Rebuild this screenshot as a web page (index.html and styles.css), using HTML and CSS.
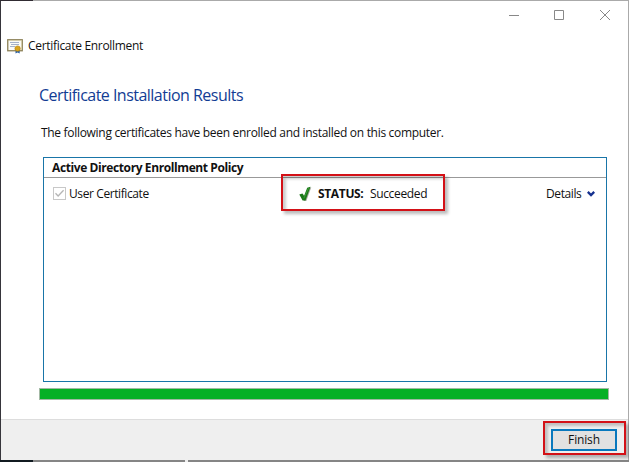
FILE: index.html
```html
<!DOCTYPE html>
<html lang="en">
<head>
<meta charset="utf-8">
<title>Certificate Enrollment</title>
<link rel="stylesheet" href="styles.css">
</head>
<body>
<div class="window">
  <div class="controls">
    <svg width="12" height="12" viewBox="0 0 12 12"><path d="M2 6.5H12"/></svg>
    <svg width="12" height="12" viewBox="0 0 12 12"><path d="M1.5 1.5H10.5V10.5H1.5Z"/></svg>
    <svg width="12" height="12" viewBox="0 0 12 12"><path d="M1 1L11 11M11 1L1 11"/></svg>
  </div>
  <header class="caption">
    <svg class="cert" width="17" height="15" viewBox="0 0 17 15">
      <rect x=".75" y=".75" width="14.5" height="11" fill="#fbfbf6" stroke="#8c8157" stroke-width="1.3"/>
      <path d="M1.5 1.5H14.5V10.5" fill="none" stroke="#d8cfa5" stroke-width=".6"/>
      <path d="M3 3.5H12M4 5.5H12M3 7.5H8" stroke="#9ba9c4" stroke-width=".9"/>
      <path d="M8.5 10V14.6L10.5 13.4L12.7 14.6V10Z" fill="#2e62a4"/>
      <circle cx="10.6" cy="9.6" r="2.7" fill="#d9a51d" stroke="#b57f08" stroke-width=".6"/>
    </svg>
    <span class="caption-text">Certificate Enrollment</span>
  </header>
  <main class="content">
    <h1>Certificate Installation Results</h1>
    <p class="intro">The following certificates have been enrolled and installed on this computer.</p>
    <section class="panel">
      <h2><span>Active Directory Enrollment Policy</span></h2>
      <div class="row">
        <div class="name">
          <svg width="13" height="13" viewBox="0 0 13 13"><rect x=".5" y=".5" width="12" height="12" fill="#fff" stroke="#c8c8c8"/><path d="M2.5 6.3L5.1 9L10.6 3.3" fill="none" stroke="#b5b5b5" stroke-width="1.3"/></svg>
          <span class="name-text">User Certificate</span>
        </div>
        <div class="status">
          <svg width="13" height="16" viewBox="0 0 13 16"><path d="M2 9L4.4 8.5L6 11L10 2.2L12.3 1.2L7.3 15H5.2Z" fill="#a9a9a1"/><path d="M.3 8.5L3.5 7.4L5 10L8.2 1.8L11.5 .8L6.5 14.4H3.6Z" fill="#1c7a19"/><path d="M4.8 12.4L9.6 2" stroke="#3a9a36" fill="none"/></svg>
          <b>STATUS:</b><span class="status-text">Succeeded</span>
        </div>
        <div class="details"><span>Details</span><svg width="8" height="6" viewBox="0 0 8 6"><path d="M.8 .9L4 4.1L7.2 .9" fill="none" stroke="#15318f" stroke-width="2.3"/></svg></div>
      </div>
    </section>
    <div class="progress"></div>
  </main>
  <footer><button><span>Finish</span></button></footer>
</div>
<div class="edge"></div>
<div class="callout callout-status"></div>
<div class="callout callout-finish"></div>
</body>
</html>
```
FILE: styles.css
```css
* { box-sizing: border-box; }
body {
  margin: 0;
  width: 629px;
  height: 462px;
  overflow: hidden;
  background: #fff;
  color: #111;
  font: 12px/16px "Open Sans", "Noto Sans", sans-serif;
  white-space: nowrap;
}
svg { display: block; flex: none; }
.window {
  height: 460px;
  display: flex;
  flex-direction: column;
  border: 1px solid #aaa;
  border-left-color: #36353b;
  border-bottom: 0;
}
.controls {
  height: 36px;
  padding: 8px 17px 0 0;
  display: flex;
  justify-content: flex-end;
  gap: 34px;
}
.controls path { fill: none; stroke: #888; stroke-width: 1; }
.caption {
  height: 18px;
  padding-left: 6px;
  display: flex;
  align-items: center;
}
.cert { margin-top: 1px; }
.caption-text { margin-left: 4px; letter-spacing: -.31px; }
.content { flex: 1; padding: 29px 19px 0 38px; }
h1 {
  margin: 0;
  font-size: 16px;
  line-height: 22px;
  font-weight: 400;
  letter-spacing: -.52px;
  color: #123c94;
}
.intro { margin: 19px 0 0 2px; letter-spacing: -.305px; }
.panel {
  width: 564px;
  height: 225px;
  margin: 16px 0 0 4px;
  border: 1px solid #1975a8;
}
h2 {
  margin: 0;
  height: 20px;
  padding-left: 8px;
  border-bottom: 1px solid #999;
  font-size: 12px;
  line-height: 20px;
  letter-spacing: -.4px;
}
.row { display: flex; height: 32px; align-items: center; padding-left: 9px; }
.name { width: 246px; display: flex; align-items: center; }
.name svg { margin-top: -1px; }
.name-text { margin-left: 3px; letter-spacing: -.4px; }
.status { width: 247px; display: flex; align-items: center; }
.status b { margin-left: 6px; letter-spacing: -.35px; }
.status-text { margin-left: 6.5px; letter-spacing: -.35px; }
.details { display: flex; align-items: center; gap: 6px; letter-spacing: -.4px; }
.progress {
  width: 570px;
  height: 12px;
  margin-top: 6px;
  border: 1px solid #a3b9a5;
  background: #06b025;
}
footer {
  height: 41px;
  padding: 9px 11px 0 0;
  display: flex;
  justify-content: flex-end;
  align-items: flex-start;
  background: #efefef;
  border-top: 1px solid #ddd;
}
button {
  width: 66px;
  height: 22px;
  padding: 0;
  border: 2px solid #0878bd;
  background: #e1e1e1;
  color: #111;
  font: inherit;
  line-height: 16px;
  letter-spacing: -.15px;
}
.edge {
  height: 2px;
  background: linear-gradient(90deg, #111a20 33px, #858585 33px 185px, #eee 185px 188px, #858585 188px);
}
.callout {
  position: absolute;
  border: 2px solid #d31117;
  box-shadow: 3px 3px 3px #0004, inset 3px 3px 3px #0003;
}
.callout-status { left: 281px; top: 174px; width: 164px; height: 37px; }
.callout-finish { left: 543px; top: 421px; width: 83px; height: 34px; }
.window::before {
  content: "";
  position: absolute;
  left: 0;
  top: 0;
  width: 33px;
  height: 1px;
  background: #302b32;
}
```
